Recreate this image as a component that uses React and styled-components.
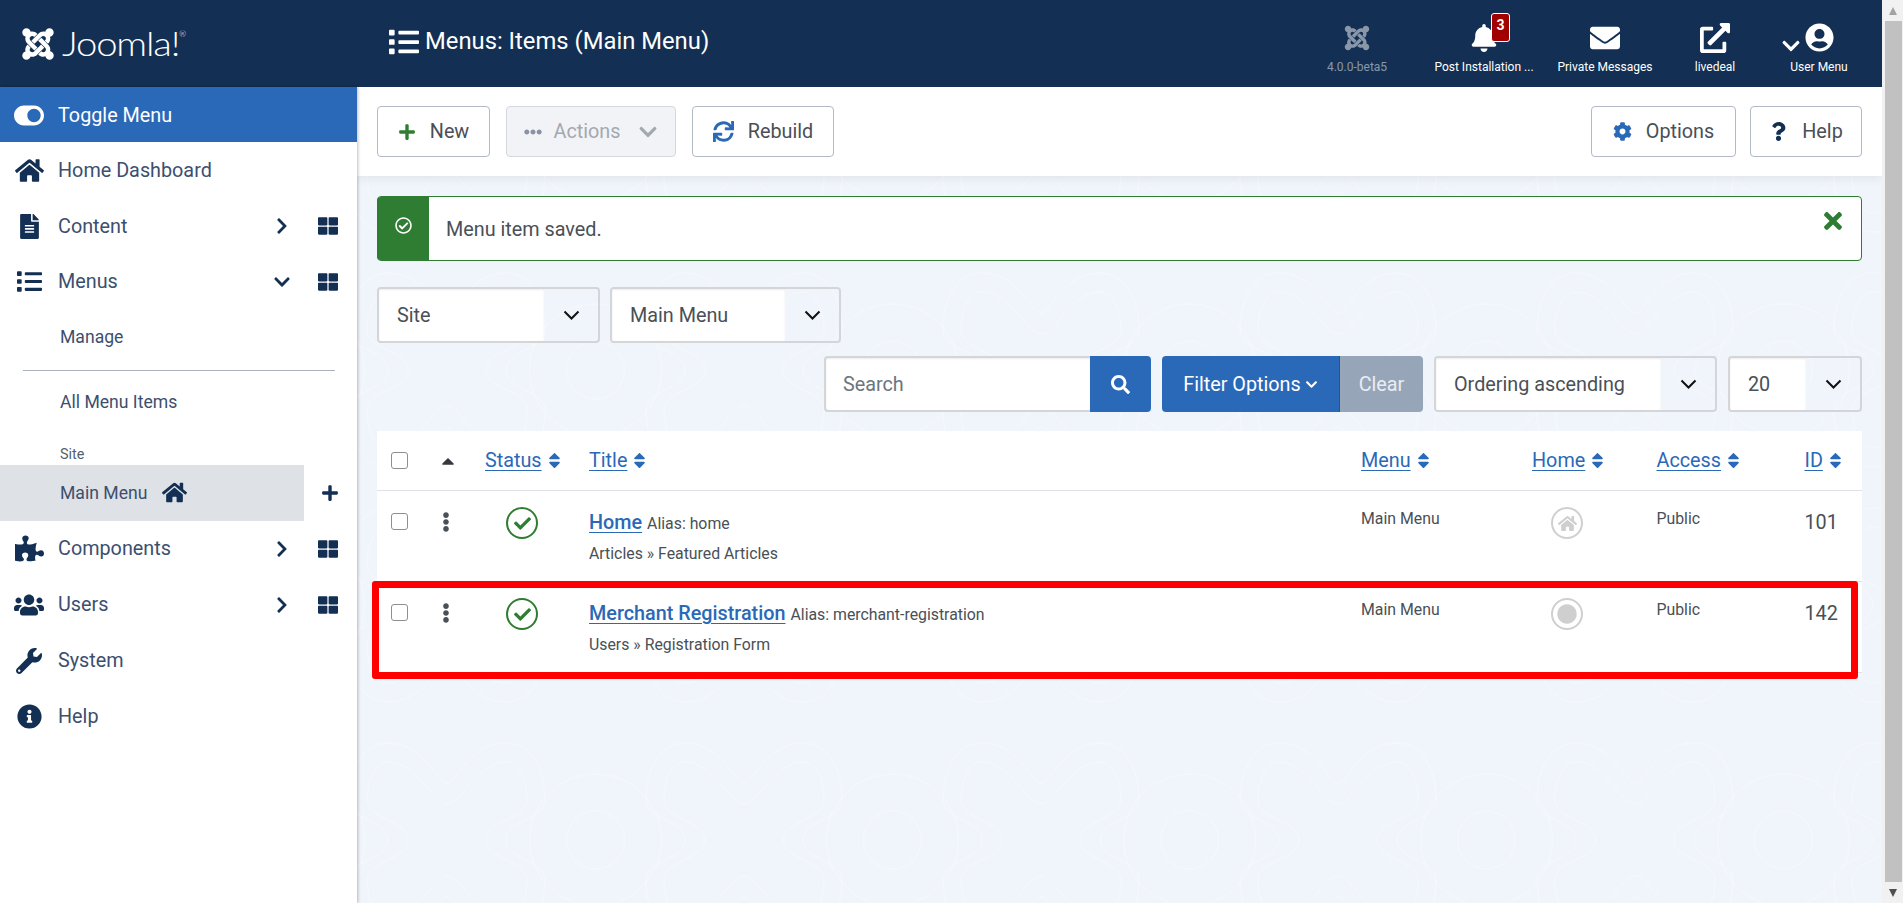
import React from 'react';
import styled, { createGlobalStyle } from 'styled-components';
import {
  FaJoomla, FaList, FaBell, FaEnvelope, FaExternalLinkAlt, FaUserCircle, FaChevronDown, FaChevronRight,
  FaToggleOn, FaHome, FaFileAlt, FaThLarge, FaPlus, FaPuzzlePiece, FaUsers, FaWrench, FaInfoCircle,
  FaEllipsisH, FaEllipsisV, FaSync, FaCog, FaQuestion, FaRegCheckCircle, FaTimes, FaSearch, FaSort,
  FaCaretUp, FaCheck, FaCircle
} from 'react-icons/fa';

const NAVY = '#132f53';
const BLUE = '#2a69b8';
const GREEN = '#2f7d32';
const TEXT = '#495057';

const GlobalStyle = createGlobalStyle`
  html, body { margin: 0; padding: 0; height: 100%; overflow: hidden; }
  body { font-family: Roboto, "Liberation Sans", sans-serif; color: ${TEXT}; background: #fff; }
  * { box-sizing: border-box; }
`;

const Page = styled.div`
  display: flex;
  width: 1903px;
  height: 903px;
  overflow: hidden;
`;

const Column = styled.div`
  flex: 1;
  min-width: 0;
  display: flex;
  flex-direction: column;
`;

/* scrollbar of the browser window */
const ScrollTrack = styled.div`
  width: 21px;
  display: flex;
  flex-direction: column;
  align-items: center;
  background: #f1f1f1;
  padding-left: 1px;
`;
const ScrollArrow = styled.div`
  height: 21px;
  display: flex;
  align-items: center;
  justify-content: center;
  &::before {
    content: '';
    border-left: 4.5px solid transparent;
    border-right: 4.5px solid transparent;
    ${p => p.$down ? 'border-top: 8px solid #505050;' : 'border-bottom: 8px solid #a3a3a3;'}
  }
`;
const ScrollThumb = styled.div`
  width: 17px;
  flex: 1;
  background: #c1c1c1;
`;

const Header = styled.header`
  height: 87px;
  flex: none;
  display: flex;
  align-items: stretch;
  background: ${NAVY};
  color: #fff;
`;
const LogoBox = styled.div`
  width: 357px;
  flex: none;
  display: flex;
  align-items: center;
  padding-left: 20px;
  gap: 6px;
`;
const LogoText = styled.span`
  font-family: Lato, sans-serif;
  font-weight: 300;
  font-size: 33px;
  letter-spacing: -1px;
  line-height: 1;
  display: inline-block;
  transform: scaleX(1.16);
  transform-origin: left center;
  sup { font-size: 7px; vertical-align: 19px; letter-spacing: 0; line-height: 0; }
`;
const PageTitle = styled.h1`
  flex: 1;
  margin: 0;
  padding: 0 0 4px 32px;
  display: flex;
  align-items: center;
  gap: 6px;
  font-size: 23.8px;
  font-weight: 400;
  line-height: 1;
`;
const HeaderItem = styled.div`
  width: ${p => p.$w}px;
  display: flex;
  flex-direction: column;
  align-items: center;
  padding-top: 22px;
  color: ${p => p.$muted ? 'rgba(255,255,255,.5)' : '#fff'};
  position: relative;
`;
const HeaderIcon = styled.div`
  height: 31px;
  display: flex;
  align-items: center;
  justify-content: center;
  position: relative;
`;
const HeaderLabel = styled.div`
  margin-top: 7px;
  font-size: 12px;
  line-height: 14px;
  white-space: nowrap;
`;
const Badge = styled.span`
  position: absolute;
  left: 21px;
  top: -9px;
  width: 19px;
  height: 29px;
  border: 1px solid #fff;
  border-radius: 3px;
  background: #a00000;
  color: #fff;
  font-size: 14px;
  font-weight: 700;
  display: flex;
  align-items: flex-start;
  justify-content: center;
  padding-top: 3px;
`;
const UserChevron = styled.span`
  position: absolute;
  left: -24px;
  top: 14px;
  display: flex;
`;
const HeaderEnd = styled.div`
  width: 13px;
`;

const Body = styled.div`
  flex: 1;
  display: flex;
  min-height: 0;
`;

const Sidebar = styled.nav`
  width: 357px;
  flex: none;
  background: #fff;
  box-shadow: 1px 0 3px rgba(0,0,0,.25);
  position: relative;
  z-index: 2;
`;
const NavRow = styled.div`
  height: ${p => p.$active ? 55 : 55.8}px;
  padding-top: 1px;
  display: flex;
  align-items: center;
  font-size: 19.8px;
  color: ${p => p.$active ? '#fff' : '#3c4f6e'};
  background: ${p => p.$active ? BLUE : 'transparent'};
`;
const NavIcon = styled.span`
  width: 30px;
  margin-left: 14px;
  margin-right: 14px;
  flex: none;
  display: flex;
  justify-content: center;
  color: ${p => p.$light ? '#fff' : NAVY};
`;
const NavLabel = styled.span`
  flex: 1;
`;
const NavAction = styled.span`
  width: ${p => p.$w || 30}px;
  flex: none;
  display: flex;
  justify-content: center;
  color: ${NAVY};
  margin-left: ${p => p.$gap || 0}px;
`;
const SubRow = styled.div`
  height: 55.6px;
  display: flex;
  align-items: center;
  padding: 0 0 1px 60px;
  font-size: 17.6px;
  color: #3c4f6e;
`;
const NavDivider = styled.hr`
  margin: 5px 22px 4px 23px;
  border: 0;
  border-top: 1px solid #aab2bd;
`;
const NavGroupLabel = styled.div`
  height: 34px;
  padding: 16px 0 0 60px;
  font-size: 14.4px;
  line-height: 16px;
  color: #555f6b;
`;
const ActiveRow = styled.div`
  height: 56px;
  display: flex;
  align-items: center;
`;
const ActiveLink = styled.div`
  width: 304px;
  height: 100%;
  background: #dee1e6;
  padding-left: 60px;
  display: flex;
  align-items: center;
  gap: 15px;
  font-size: 17.6px;
  color: #3c4f6e;
  svg { color: ${NAVY}; }
`;

const Main = styled.main`
  flex: 1;
  min-width: 0;
  position: relative;
  background: #f0f4fb;
  overflow: hidden;
`;
const Backdrop = styled.svg`
  position: absolute;
  left: 0;
  top: 0;
  width: 100%;
  height: 100%;
`;
const Toolbar = styled.div`
  height: 89px;
  position: relative;
  background: #fff;
  box-shadow: 0 2px 10px rgba(0,0,0,.08);
  display: flex;
  align-items: flex-start;
  padding: 19px 20px 0;
  gap: 16px;
`;
const ToolSpacer = styled.div`
  flex: 1;
`;
const Button = styled.div`
  height: 51px;
  width: ${p => p.$w}px;
  margin-left: ${p => p.$shift || 0}px;
  display: flex;
  align-items: center;
  justify-content: center;
  gap: ${p => p.$gap || 14}px;
  border: 1px solid ${p => p.$disabled ? '#d5d9df' : '#b2bac6'};
  border-radius: 4px;
  background: ${p => p.$disabled ? '#f2f3f6' : '#fff'};
  color: ${p => p.$disabled ? '#a3a9b1' : TEXT};
  font-size: 19.8px;
`;
const ActionsChevron = styled(FaChevronDown)`
  margin-left: 6px;
`;
const Content = styled.div`
  position: relative;
  padding: 20px 20px 0;
`;
const Alert = styled.div`
  height: 65px;
  display: flex;
  align-items: center;
  background: #fff;
  border: 1px solid ${GREEN};
  border-radius: 4px;
  font-size: 19.8px;
  color: ${TEXT};
  position: relative;
`;
const AlertIcon = styled.div`
  width: 52px;
  align-self: stretch;
  flex: none;
  margin-left: -1px;
  background: ${GREEN};
  border-radius: 4px 0 0 4px;
  color: #fff;
  display: flex;
  justify-content: center;
  padding-top: 20px;
`;
const AlertText = styled.div`
  flex: 1;
  padding: 2px 0 0 17px;
`;
const AlertClose = styled.div`
  position: absolute;
  right: 15px;
  top: 11px;
  color: ${GREEN};
  display: flex;
`;
const FilterRow = styled.div`
  display: flex;
  justify-content: ${p => p.$end ? 'flex-end' : 'flex-start'};
  gap: ${p => p.$end ? 11 : 10}px;
  margin-top: ${p => p.$end ? 13 : 26}px;
`;
const Select = styled.div`
  width: ${p => p.$w}px;
  height: 56px;
  display: flex;
  border: 2px solid #d3d5d9;
  border-radius: 4px;
  font-size: 19.8px;
  color: ${TEXT};
`;
const SelectValue = styled.div`
  flex: 1;
  background: #fff;
  padding-left: 18px;
  display: flex;
  align-items: center;
  border-radius: 2px 0 0 2px;
  box-shadow: inset 0 1px 2px rgba(0,0,0,.08);
`;
const SelectArrow = styled.div`
  width: 54px;
  display: flex;
  align-items: center;
  justify-content: center;
`;
const Group = styled.div`
  display: flex;
  height: 56px;
`;
const SearchInput = styled.div`
  width: 266px;
  border: 2px solid #d3d5d9;
  border-right: 0;
  border-radius: 4px 0 0 4px;
  background: #fff;
  box-shadow: inset 0 1px 2px rgba(0,0,0,.08);
  padding-left: 17px;
  display: flex;
  align-items: center;
  font-size: 19.8px;
  color: #6d757d;
`;
const SearchButton = styled.div`
  width: 61px;
  background: ${BLUE};
  border-radius: 0 4px 4px 0;
  color: #fff;
  display: flex;
  align-items: center;
  justify-content: center;
`;
const FilterButton = styled.div`
  width: 177px;
  background: ${BLUE};
  color: #fff;
  border-radius: 4px 0 0 4px;
  display: flex;
  align-items: center;
  justify-content: center;
  gap: 4px;
  font-size: 19.8px;
`;
const ClearButton = styled.div`
  width: 84px;
  background: #97a5b9;
  color: #e9edf2;
  border-left: 1px solid #1f5596;
  border-radius: 0 4px 4px 0;
  display: flex;
  align-items: center;
  justify-content: center;
  font-size: 19.8px;
`;

const COLUMNS = '46px 48px 104px 772px 171px 124.5px 148px 1fr';

const Table = styled.div`
  margin-top: 19px;
  background: #fff;
`;
const HeadRow = styled.div`
  height: 60px;
  display: grid;
  grid-template-columns: ${COLUMNS};
  align-items: center;
  padding-left: 14px;
  border-bottom: 1px solid #dee2e6;
`;
const HeadLink = styled.span`
  display: inline-flex;
  align-items: center;
  gap: 3px;
  font-size: 19.8px;
  color: ${BLUE};
  u { text-underline-offset: 3px; }
`;
const CaretCell = styled.span`
  display: flex;
  color: #343a40;
  margin-left: 1px;
`;
const Row = styled.div`
  height: 91px;
  position: relative;
  display: grid;
  grid-template-columns: ${COLUMNS};
  align-items: start;
  padding: 16px 0 0 14px;
  border-bottom: 1px solid #dee2e6;
`;
const Highlight = styled.div`
  position: absolute;
  left: -5px;
  right: 4px;
  top: -1px;
  bottom: -7px;
  border: 7px solid #f00;
  border-radius: 3px;
`;
const Checkbox = styled.input.attrs({ type: 'checkbox' })`
  appearance: none;
  width: 17px;
  height: 17px;
  margin: 0;
  background: #fff;
  border: 1px solid #8a8f95;
  border-radius: 3px;
  display: block;
`;
const RowCheck = styled(Checkbox)`
  margin-top: 6px;
`;
const DragHandle = styled.span`
  display: flex;
  margin: 5px 0 0 -1px;
  color: ${TEXT};
`;
const StateIcon = styled.span`
  width: 32px;
  height: 32px;
  margin-left: ${p => p.$left}px;
  border: 2px solid ${p => p.$on ? GREEN : '#cfcfcf'};
  border-radius: 50%;
  color: ${p => p.$on ? GREEN : '#cfcfcf'};
  display: flex;
  align-items: center;
  justify-content: center;
`;
const TitleCell = styled.div`
  padding-top: 1px;
`;
const TitleLine = styled.div`
  display: flex;
  align-items: baseline;
  gap: 5px;
  line-height: 30px;
`;
const TitleLink = styled.a`
  font-size: 19.8px;
  font-weight: 500;
  color: ${BLUE};
  text-decoration: underline;
  text-underline-offset: 3px;
`;
const Small = styled.span`
  font-size: 15.84px;
  color: ${TEXT};
`;
const TypeLine = styled.div`
  margin-top: 5px;
  font-size: 15.84px;
  line-height: 20px;
  color: ${TEXT};
`;
const PlainCell = styled.div`
  font-size: 15.84px;
  line-height: 20px;
  margin-top: 2px;
  color: ${TEXT};
`;
const IdCell = styled.div`
  font-size: 19.8px;
  line-height: 22px;
  margin-top: 5px;
  color: ${TEXT};
`;

const heads = ['Status', 'Title', 'Menu', 'Home', 'Access', 'ID'];

const rows = [
  { id: 101, title: 'Home', alias: 'home', type: 'Articles » Featured Articles', home: <FaHome size={19} /> },
  { id: 142, title: 'Merchant Registration', alias: 'merchant-registration', type: 'Users » Registration Form', home: <FaCircle size={20} />, marked: true }
];

const Chevron = () => (
  <svg width="17" height="10" viewBox="0 0 17 10" fill="none" stroke="#111" strokeWidth="2">
    <path d="M1.5 1.5 L8.5 8.5 L15.5 1.5" />
  </svg>
);

const SelectBox = ({ w, children }) => (
  <Select $w={w}>
    <SelectValue>{children}</SelectValue>
    <SelectArrow><Chevron /></SelectArrow>
  </Select>
);

const NavItem = ({ icon, children, open, tools }) => (
  <NavRow>
    <NavIcon>{icon}</NavIcon>
    <NavLabel>{children}</NavLabel>
    {tools && (
      <>
        <NavAction>{open ? <FaChevronDown size={18} /> : <FaChevronRight size={18} />}</NavAction>
        <NavAction $gap={16}><FaThLarge size={20} /></NavAction>
        <NavAction $w={14} />
      </>
    )}
  </NavRow>
);

export default function App() {
  return (
    <Page>
      <GlobalStyle />
      <Column>
        <Header>
          <LogoBox>
            <FaJoomla size={36} />
            <LogoText>Joomla!<sup>®</sup></LogoText>
          </LogoBox>
          <PageTitle><FaList size={30} />Menus: Items (Main Menu)</PageTitle>
          <HeaderItem $w={124} $muted>
            <HeaderIcon><FaJoomla size={28} /></HeaderIcon>
            <HeaderLabel>4.0.0-beta5</HeaderLabel>
          </HeaderItem>
          <HeaderItem $w={130}>
            <HeaderIcon>
              <FaBell size={28} />
              <Badge>3</Badge>
            </HeaderIcon>
            <HeaderLabel>Post Installation ...</HeaderLabel>
          </HeaderItem>
          <HeaderItem $w={112}>
            <HeaderIcon><FaEnvelope size={30} /></HeaderIcon>
            <HeaderLabel>Private Messages</HeaderLabel>
          </HeaderItem>
          <HeaderItem $w={108}>
            <HeaderIcon><FaExternalLinkAlt size={30} /></HeaderIcon>
            <HeaderLabel>livedeal</HeaderLabel>
          </HeaderItem>
          <HeaderItem $w={100}>
            <HeaderIcon>
              <UserChevron><FaChevronDown size={20} /></UserChevron>
              <FaUserCircle size={29} />
            </HeaderIcon>
            <HeaderLabel>User Menu</HeaderLabel>
          </HeaderItem>
          <HeaderEnd />
        </Header>
        <Body>
          <Sidebar>
            <NavRow $active>
              <NavIcon $light><FaToggleOn size={31} /></NavIcon>
              <NavLabel>Toggle Menu</NavLabel>
            </NavRow>
            <NavItem icon={<FaHome size={29} />}>Home Dashboard</NavItem>
            <NavItem icon={<FaFileAlt size={25} />} tools>Content</NavItem>
            <NavItem icon={<FaList size={25} />} tools open>Menus</NavItem>
            <SubRow>Manage</SubRow>
            <NavDivider />
            <SubRow>All Menu Items</SubRow>
            <NavGroupLabel>Site</NavGroupLabel>
            <ActiveRow>
              <ActiveLink>Main Menu <FaHome size={25} /></ActiveLink>
              <NavAction $gap={11}><FaPlus size={18} /></NavAction>
            </ActiveRow>
            <NavItem icon={<FaPuzzlePiece size={29} />} tools>Components</NavItem>
            <NavItem icon={<FaUsers size={32} />} tools>Users</NavItem>
            <NavItem icon={<FaWrench size={26} />}>System</NavItem>
            <NavItem icon={<FaInfoCircle size={25} />}>Help</NavItem>
          </Sidebar>
          <Main>
            <Backdrop>
              <defs>
                <pattern id="joomla-bg" patternUnits="userSpaceOnUse" x="535.5" y="-69.5" width="297" height="235">
                  <g fill="none" stroke="#f7f9fc" strokeWidth="1">
                    <g transform="translate(148.5 117.5)">
                      <path d="M0 -57 C-10 -57 -22 -97 -59 -97 C-85 -97 -98 -70 -98 -40 C-98 -20 -59 -20 -59 0 C-59 20 -98 20 -98 40 C-98 70 -85 97 -59 97 C-22 97 -10 57 0 57 C10 57 22 97 59 97 C85 97 98 70 98 40 C98 20 59 20 59 0 C59 -20 98 -20 98 -40 C98 -70 85 -97 59 -97 C22 -97 10 -57 0 -57 Z" />
                      <path d="M0 -36 C-14 -36 -30 -78 -59 -78 C-72 -78 -80 -60 -80 -40 C-80 -20 -39 -20 -39 0 C-39 20 -80 20 -80 40 C-80 60 -72 78 -59 78 C-30 78 -14 36 0 36 C14 36 30 78 59 78 C72 78 80 60 80 40 C80 20 39 20 39 0 C39 -20 80 -20 80 -40 C80 -60 72 -78 59 -78 C30 -78 14 -36 0 -36 Z" />
                    </g>
                    <circle cx="0" cy="117.5" r="66" />
                    <circle cx="297" cy="117.5" r="66" />
                    <circle cx="0" cy="117.5" r="29" />
                    <circle cx="297" cy="117.5" r="29" />
                  </g>
                </pattern>
              </defs>
              <rect width="100%" height="100%" fill="url(#joomla-bg)" />
            </Backdrop>
            <Toolbar>
              <Button $w={113}><FaPlus size={18} color={GREEN} />New</Button>
              <Button $w={170} $disabled $gap={12}>
                <FaEllipsisH size={18} color="#8a93a3" />Actions<ActionsChevron size={20} />
              </Button>
              <Button $w={142}><FaSync size={21} color={BLUE} />Rebuild</Button>
              <ToolSpacer />
              <Button $w={145}><FaCog size={19} color={BLUE} />Options</Button>
              <Button $w={112} $shift={-2}><FaQuestion size={19} color={NAVY} />Help</Button>
            </Toolbar>
            <Content>
              <Alert>
                <AlertIcon><FaRegCheckCircle size={17} /></AlertIcon>
                <AlertText>Menu item saved.</AlertText>
                <AlertClose><FaTimes size={26} /></AlertClose>
              </Alert>
              <FilterRow>
                <SelectBox w={223}>Site</SelectBox>
                <SelectBox w={231}>Main Menu</SelectBox>
              </FilterRow>
              <FilterRow $end>
                <Group>
                  <SearchInput>Search</SearchInput>
                  <SearchButton><FaSearch size={19} /></SearchButton>
                </Group>
                <Group>
                  <FilterButton>Filter Options <FaChevronDown size={13} /></FilterButton>
                  <ClearButton>Clear</ClearButton>
                </Group>
                <SelectBox w={283}>Ordering ascending</SelectBox>
                <SelectBox w={134}>20</SelectBox>
              </FilterRow>
              <Table>
                <HeadRow>
                  <Checkbox />
                  <CaretCell><FaCaretUp size={20} /></CaretCell>
                  {heads.map(label => (
                    <div key={label}>
                      <HeadLink><u>{label}</u><FaSort size={19} /></HeadLink>
                    </div>
                  ))}
                </HeadRow>
                {rows.map(r => (
                  <Row key={r.id}>
                    <RowCheck />
                    <DragHandle><FaEllipsisV size={20} /></DragHandle>
                    <StateIcon $on $left={21}><FaCheck size={17} /></StateIcon>
                    <TitleCell>
                      <TitleLine>
                        <TitleLink>{r.title}</TitleLink>
                        <Small>Alias: {r.alias}</Small>
                      </TitleLine>
                      <TypeLine>{r.type}</TypeLine>
                    </TitleCell>
                    <PlainCell>Main Menu</PlainCell>
                    <StateIcon $left={19}>{r.home}</StateIcon>
                    <PlainCell>Public</PlainCell>
                    <IdCell>{r.id}</IdCell>
                    {r.marked && <Highlight />}
                  </Row>
                ))}
              </Table>
            </Content>
          </Main>
        </Body>
      </Column>
      <ScrollTrack>
        <ScrollArrow />
        <ScrollThumb />
        <ScrollArrow $down />
      </ScrollTrack>
    </Page>
  );
}
